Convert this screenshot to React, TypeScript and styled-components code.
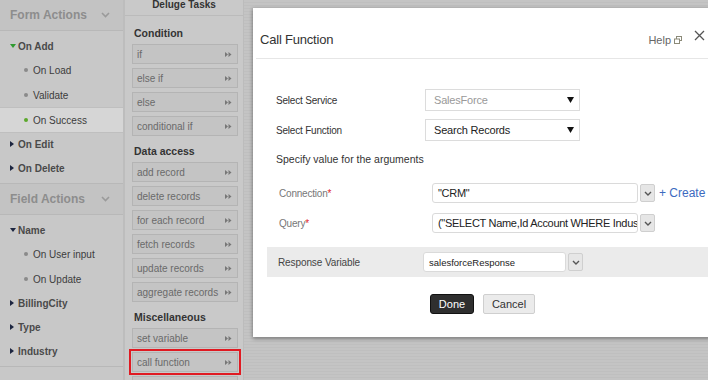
import React from "react";
import styled, { createGlobalStyle } from "styled-components";

const Global = createGlobalStyle`
  html, body {
    margin: 0;
    padding: 0;
    width: 708px;
    height: 380px;
    overflow: hidden;
    font-family: "Liberation Sans", Arial, sans-serif;
  }
`;

type TreeNode = { label: string; open?: boolean; accent?: boolean; children?: { label: string; active?: boolean }[] };

const formActions: TreeNode[] = [
  {
    label: "On Add",
    open: true,
    accent: true,
    children: [{ label: "On Load" }, { label: "Validate" }, { label: "On Success", active: true }],
  },
  { label: "On Edit" },
  { label: "On Delete" },
];

const fieldActions: TreeNode[] = [
  { label: "Name", open: true, children: [{ label: "On User input" }, { label: "On Update" }] },
  { label: "BillingCity" },
  { label: "Type" },
  { label: "Industry" },
];

const taskGroups = [
  { title: "Condition", items: ["if", "else if", "else", "conditional if"] },
  {
    title: "Data access",
    items: ["add record", "delete records", "for each record", "fetch records", "update records", "aggregate records"],
  },
  { title: "Miscellaneous", items: ["set variable", "call function", ""] },
];

export default function App() {
  return (
    <>
      <Global />
      <S.Page>
        <S.Sidebar>
          <ActionSection title="Form Actions" nodes={formActions} />
          <ActionSection title="Field Actions" nodes={fieldActions} />
        </S.Sidebar>

        <S.Tasks>
          <S.TasksHeader>Deluge Tasks</S.TasksHeader>
          <S.TasksBody>
            {taskGroups.map((g) => (
              <div key={g.title}>
                <S.GroupTitle>{g.title}</S.GroupTitle>
                {g.items.map((it, i) => (
                  <S.TaskItem key={it || i} $selected={it === "call function"}>
                    <span>{it}</span>
                    <svg width="7" height="5" viewBox="0 0 7 5">
                      <path d="M0 0 L3 2.5 L0 5 Z M3.5 0 L6.5 2.5 L3.5 5 Z" fill="#777" />
                    </svg>
                  </S.TaskItem>
                ))}
              </div>
            ))}
          </S.TasksBody>
        </S.Tasks>

        <S.Canvas>
          <S.Modal>
            <S.ModalHeader>
              <S.ModalTitle>Call Function</S.ModalTitle>
              <S.HelpLink>
                Help
                <svg width="8" height="8" viewBox="0 0 8 8">
                  <rect x="2.5" y="0.5" width="5" height="4" fill="none" stroke="#8b8a78" />
                  <rect x="0.5" y="3" width="5" height="4.5" fill="#fff" stroke="#8b8a78" />
                </svg>
              </S.HelpLink>
              <S.Close>
                <svg width="11" height="11" viewBox="0 0 11 11">
                  <path d="M1 1 L10 10 M10 1 L1 10" stroke="#555" strokeWidth="1.3" />
                </svg>
              </S.Close>
            </S.ModalHeader>

            <S.ModalBody>
              <S.FormRow>
                <S.Label>Select Service</S.Label>
                <S.Select $muted>
                  SalesForce
                  <DownTriangle />
                </S.Select>
              </S.FormRow>
              <S.FormRow>
                <S.Label>Select Function</S.Label>
                <S.Select>
                  Search Records
                  <DownTriangle />
                </S.Select>
              </S.FormRow>
              <S.Note>Specify value for the arguments</S.Note>

              <S.ArgRow>
                <S.ArgLabel>
                  Connection<S.Req>*</S.Req>
                </S.ArgLabel>
                <S.Input $width={206}>"CRM"</S.Input>
                <DropButton />
                <S.Create>+ Create</S.Create>
              </S.ArgRow>
              <S.ArgRow>
                <S.ArgLabel>
                  Query<S.Req>*</S.Req>
                </S.ArgLabel>
                <S.Input $width={206}>("SELECT Name,Id Account WHERE Industry = 'Banking'")</S.Input>
                <DropButton />
              </S.ArgRow>

              <S.ResponseBand>
                <S.ResponseLabel>Response Variable</S.ResponseLabel>
                <S.Input $width={143} $small>
                  salesforceResponse
                </S.Input>
                <DropButton />
              </S.ResponseBand>

              <S.Actions>
                <S.DoneButton>Done</S.DoneButton>
                <S.CancelButton>Cancel</S.CancelButton>
              </S.Actions>
            </S.ModalBody>
          </S.Modal>
        </S.Canvas>
      </S.Page>
    </>
  );
}

function ActionSection({ title, nodes }: { title: string; nodes: TreeNode[] }) {
  return (
    <section>
      <S.SectionHeader>
        {title}
        <svg width="9" height="6" viewBox="0 0 9 6">
          <path d="M1 1 L4.5 4.5 L8 1" fill="none" stroke="#9a9a9a" strokeWidth="1.6" />
        </svg>
      </S.SectionHeader>
      <S.Tree>
        {nodes.map((n) => (
          <React.Fragment key={n.label}>
            <S.TreeRow>
              <S.Caret>
                {n.open ? (
                  <svg width="6" height="4" viewBox="0 0 6 4">
                    <path d="M0 0 L6 0 L3 4 Z" fill={n.accent ? "#2f9a2f" : "#1c2540"} />
                  </svg>
                ) : (
                  <svg width="4" height="6" viewBox="0 0 4 6">
                    <path d="M0 0 L4 3 L0 6 Z" fill="#1c2540" />
                  </svg>
                )}
              </S.Caret>
              {n.label}
            </S.TreeRow>
            {n.children?.map((c) => (
              <S.SubRow key={c.label} $active={c.active}>
                <S.Dot $active={c.active} />
                {c.label}
              </S.SubRow>
            ))}
          </React.Fragment>
        ))}
      </S.Tree>
    </section>
  );
}

function DownTriangle() {
  return (
    <svg width="7" height="6" viewBox="0 0 7 6">
      <path d="M0 0 L7 0 L3.5 6 Z" fill="#111" />
    </svg>
  );
}

function DropButton() {
  return (
    <S.DropBtn>
      <svg width="8" height="5" viewBox="0 0 8 5">
        <path d="M1 1 L4 4 L7 1" fill="none" stroke="#555" strokeWidth="1.4" />
      </svg>
    </S.DropBtn>
  );
}

const S = {
  Page: styled.div`
    display: flex;
    width: 708px;
    height: 380px;
    overflow: hidden;
    background: #c6c6c6;
  `,
  Sidebar: styled.div`
    width: 123px;
    flex-shrink: 0;
    background: #c8c8c8;
    border-right: 2px solid #bdbdbd;
  `,
  SectionHeader: styled.div`
    height: 30px;
    display: flex;
    align-items: center;
    justify-content: space-between;
    padding: 0 13px 0 10px;
    background: #c3c3c3;
    border-bottom: 1px solid #b8b8b8;
    color: #8d8d8d;
    font-size: 12px;
    font-weight: bold;
  `,
  Tree: styled.div`
    padding: 3px 0 3px;
    border-bottom: 1px solid #b8b8b8;
  `,
  TreeRow: styled.div`
    height: 24px;
    display: flex;
    align-items: center;
    padding-left: 10px;
    color: #4a4a4a;
    font-size: 10px;
    font-weight: bold;
  `,
  Caret: styled.span`
    width: 8px;
    display: inline-flex;
    align-items: center;
  `,
  SubRow: styled.div<{ $active?: boolean }>`
    height: 24px;
    display: flex;
    align-items: center;
    padding-left: 24px;
    color: #3c3c3c;
    font-size: 10px;
    background: ${(p) => (p.$active ? "#d6d6d6" : "transparent")};
    border-top: 1px solid ${(p) => (p.$active ? "#bfbfbf" : "transparent")};
    border-bottom: 1px solid ${(p) => (p.$active ? "#bfbfbf" : "transparent")};
    margin: -1px 0;
  `,
  Dot: styled.span<{ $active?: boolean }>`
    width: 4px;
    height: 4px;
    border-radius: 50%;
    margin-right: 5px;
    background: ${(p) => (p.$active ? "#5ca82c" : "#8a8a8a")};
  `,
  Tasks: styled.div`
    width: 118px;
    flex-shrink: 0;
    background: #c9c9c9;
    border-right: 1px solid #bcbcbc;
  `,
  TasksHeader: styled.div`
    height: 15px;
    line-height: 10px;
    text-align: center;
    color: #333;
    font-size: 10px;
    font-weight: bold;
    border-bottom: 1px solid #bbb;
  `,
  TasksBody: styled.div`
    padding: 6px 5px 0 7px;
  `,
  GroupTitle: styled.div`
    height: 22px;
    line-height: 22px;
    color: #333;
    font-size: 10.5px;
    font-weight: bold;
    padding-left: 2px;
  `,
  TaskItem: styled.div<{ $selected?: boolean }>`
    height: 20px;
    box-sizing: border-box;
    margin-bottom: 4px;
    display: flex;
    align-items: center;
    justify-content: space-between;
    padding: 0 5px 0 4px;
    background: #c4c4c4;
    border: 1px solid #b4b4b4;
    color: #6a6a6a;
    font-size: 10px;
    white-space: nowrap;
    outline: ${(p) => (p.$selected ? "2px solid #e01a22" : "none")};
    outline-offset: 1px;
  `,
  Canvas: styled.div`
    flex: 1;
    min-width: 0;
    overflow: hidden;
    padding: 8px 0 0 9px;
    background: repeating-linear-gradient(to bottom, #c4c4c4 0, #c4c4c4 2px, #bfbfbf 2px, #bfbfbf 3px);
  `,
  Modal: styled.div`
    width: 458px;
    height: 329px;
    background: #fff;
    box-shadow: 0 2px 4px rgba(0, 0, 0, 0.3), -1px 0 3px rgba(0, 0, 0, 0.15);
  `,
  ModalHeader: styled.div`
    height: 51px;
    box-sizing: border-box;
    margin-left: 3px;
    display: flex;
    align-items: center;
    padding: 12px 0 0 4px;
    border-bottom: 1px solid #e6e6e6;
  `,
  ModalTitle: styled.div`
    flex: 1;
    color: #333;
    font-size: 13px;
    letter-spacing: -0.2px;
  `,
  HelpLink: styled.div`
    display: flex;
    align-items: center;
    gap: 3px;
    color: #666;
    font-size: 11px;
    margin-right: 12px;
    padding-top: 2px;
  `,
  Close: styled.div`
    width: 11px;
    margin-right: 6px;
    display: flex;
    margin-top: -8px;
  `,
  ModalBody: styled.div`
    padding-top: 30px;
  `,
  FormRow: styled.div`
    display: flex;
    align-items: center;
    height: 22px;
    margin-bottom: 8px;
    padding-left: 23px;
  `,
  Label: styled.div`
    width: 149px;
    color: #333;
    font-size: 10px;
    letter-spacing: -0.2px;
  `,
  Select: styled.div<{ $muted?: boolean }>`
    width: 155px;
    height: 22px;
    box-sizing: border-box;
    display: flex;
    align-items: center;
    justify-content: space-between;
    padding: 0 5px 0 8px;
    border: 1px solid #dcdcdc;
    color: ${(p) => (p.$muted ? "#999" : "#222")};
    font-size: 11px;
    letter-spacing: -0.2px;
  `,
  Note: styled.div`
    padding: 4px 0 0 23px;
    height: 20px;
    color: #333;
    font-size: 10.5px;
  `,
  ArgRow: styled.div`
    display: flex;
    align-items: center;
    height: 20px;
    margin-top: 10px;
    padding-left: 26px;
  `,
  ArgLabel: styled.div`
    width: 153px;
    color: #777;
    font-size: 10px;
    letter-spacing: -0.2px;
  `,
  Req: styled.span`
    color: #e0242a;
  `,
  Input: styled.div<{ $width: number; $small?: boolean }>`
    width: ${(p) => p.$width}px;
    height: 20px;
    box-sizing: border-box;
    display: flex;
    align-items: center;
    padding: 0 5px;
    border: 1px solid #dadada;
    border-radius: 3px;
    background: #fff;
    color: #222;
    font-size: ${(p) => (p.$small ? "9.5px" : "11px")};
    letter-spacing: ${(p) => (p.$small ? "0" : "-0.3px")};
    white-space: nowrap;
    overflow: hidden;
  `,
  DropBtn: styled.div`
    width: 15px;
    height: 18px;
    box-sizing: border-box;
    margin-left: 2px;
    display: flex;
    align-items: center;
    justify-content: center;
    background: #e6e6e6;
    border: 1px solid #cfcfcf;
    border-radius: 2px;
  `,
  Create: styled.div`
    margin-left: 4px;
    color: #3d6bbf;
    font-size: 12px;
    white-space: nowrap;
  `,
  ResponseBand: styled.div`
    display: flex;
    align-items: center;
    height: 30px;
    margin: 14px 0 0 14px;
    padding-left: 11px;
    background: #ebebeb;
  `,
  ResponseLabel: styled.div`
    width: 145px;
    color: #444;
    font-size: 10px;
    letter-spacing: -0.1px;
  `,
  Actions: styled.div`
    display: flex;
    gap: 9px;
    padding: 17px 0 0 177px;
  `,
  DoneButton: styled.div`
    width: 44px;
    height: 20px;
    box-sizing: border-box;
    display: flex;
    align-items: center;
    justify-content: center;
    background: #2f2f2f;
    border: 1px solid #111;
    border-radius: 3px;
    color: #fff;
    font-size: 11px;
  `,
  CancelButton: styled.div`
    width: 52px;
    height: 20px;
    box-sizing: border-box;
    display: flex;
    align-items: center;
    justify-content: center;
    background: #ebebeb;
    border: 1px solid #cfcfcf;
    border-radius: 2px;
    color: #333;
    font-size: 11px;
  `,
};
